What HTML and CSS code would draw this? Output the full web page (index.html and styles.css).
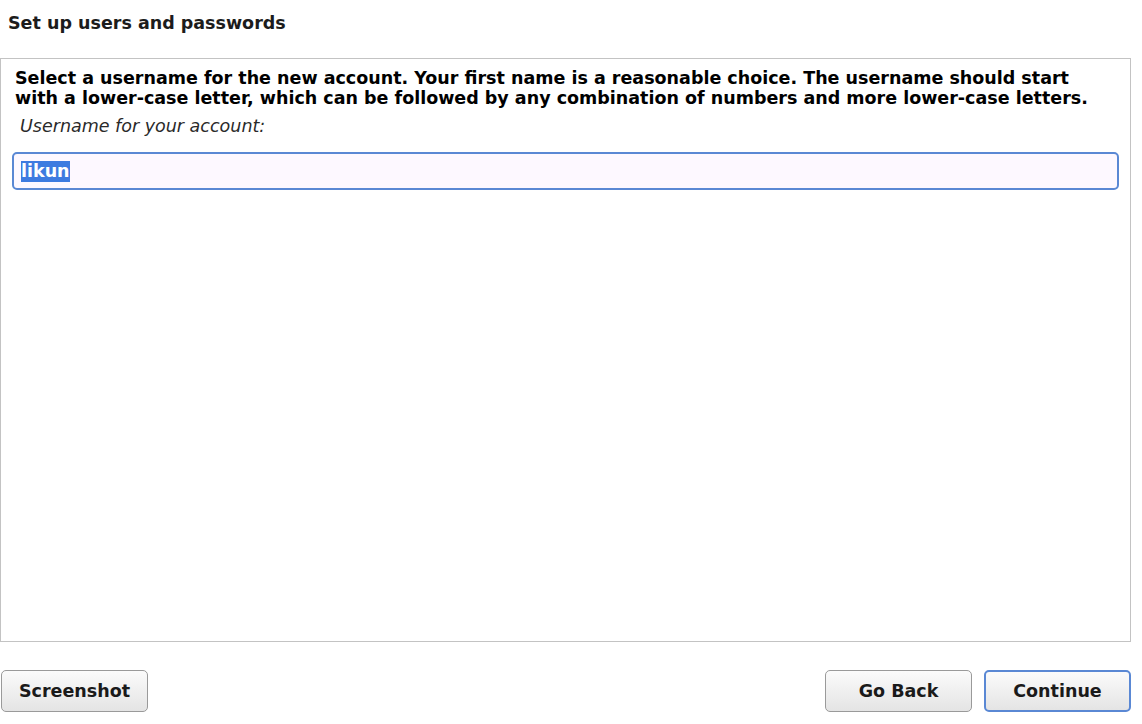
FILE: index.html
```html
<!DOCTYPE html>
<html lang="en">
<head>
  <meta charset="UTF-8">
  <title>Set up users and passwords</title>
  <link rel="stylesheet" href="styles.css">
</head>
<body>

  <div class="installer">
    <h1 class="page-title">Set up users and passwords</h1>

    <div class="panel">
      <p class="question">Select a username for the new account. Your first name is a reasonable choice. The username should start with a lower-case letter, which can be followed by any combination of numbers and more lower-case letters.</p>
      <p class="field-label">Username for your account:</p>
      <div class="entry"><span class="selected">likun</span></div>
    </div>

    <div class="button-bar">
      <button class="btn">Screenshot</button>
      <div class="nav-buttons">
        <button class="btn">Go Back</button>
        <button class="btn btn-continue">Continue</button>
      </div>
    </div>
  </div>

</body>
</html>
```

FILE: styles.css
```css
body {
  margin: 0;
  background: #fff;
  font-family: 'DejaVu Sans', 'Liberation Sans', sans-serif;
  font-size: 17.5px;
  color: #1a1a1a;
}
.installer {
  width: 1131px;
  padding-top: 13px;
}
.page-title {
  font-size: 17.5px;
  font-weight: bold;
  margin: 0 0 0 8px;
  line-height: 20px;
  color: #1c1c1c;
}
.panel {
  margin-top: 25px;
  height: 582px;
  border: 1px solid #c3c3c3;
  padding: 0 11px 0 11px;
}
.question {
  max-width: 1075px;
  margin: 9px 0 0 3px;
  font-weight: bold;
  line-height: 20px;
  color: #000;
}
.field-label {
  margin: 8px 0 0 8px;
  font-style: italic;
  line-height: 20px;
  color: #2a2a2a;
}
.entry {
  margin-top: 16px;
  height: 34px;
  border: 2px solid #5a88d4;
  border-radius: 5px;
  background: #fdf8ff;
  display: flex;
  align-items: center;
  padding-left: 7px;
}
.selected {
  background: #3d7be0;
  color: #fff;
  font-weight: bold;
  line-height: 21px;
}
.button-bar {
  margin-top: 28px;
  display: flex;
  justify-content: space-between;
  padding-left: 1px;
}
.nav-buttons {
  display: flex;
  gap: 12px;
}
.btn {
  height: 42px;
  width: 147px;
  border: 1px solid #9a9a9a;
  border-radius: 5px;
  background: linear-gradient(#fbfbfb, #e4e4e4);
  font-family: 'DejaVu Sans', 'Liberation Sans', sans-serif;
  font-size: 17.5px;
  font-weight: bold;
  color: #1a1a1a;
  padding: 0;
}
.btn-continue {
  border: 2px solid #5a88d4;
}
```
